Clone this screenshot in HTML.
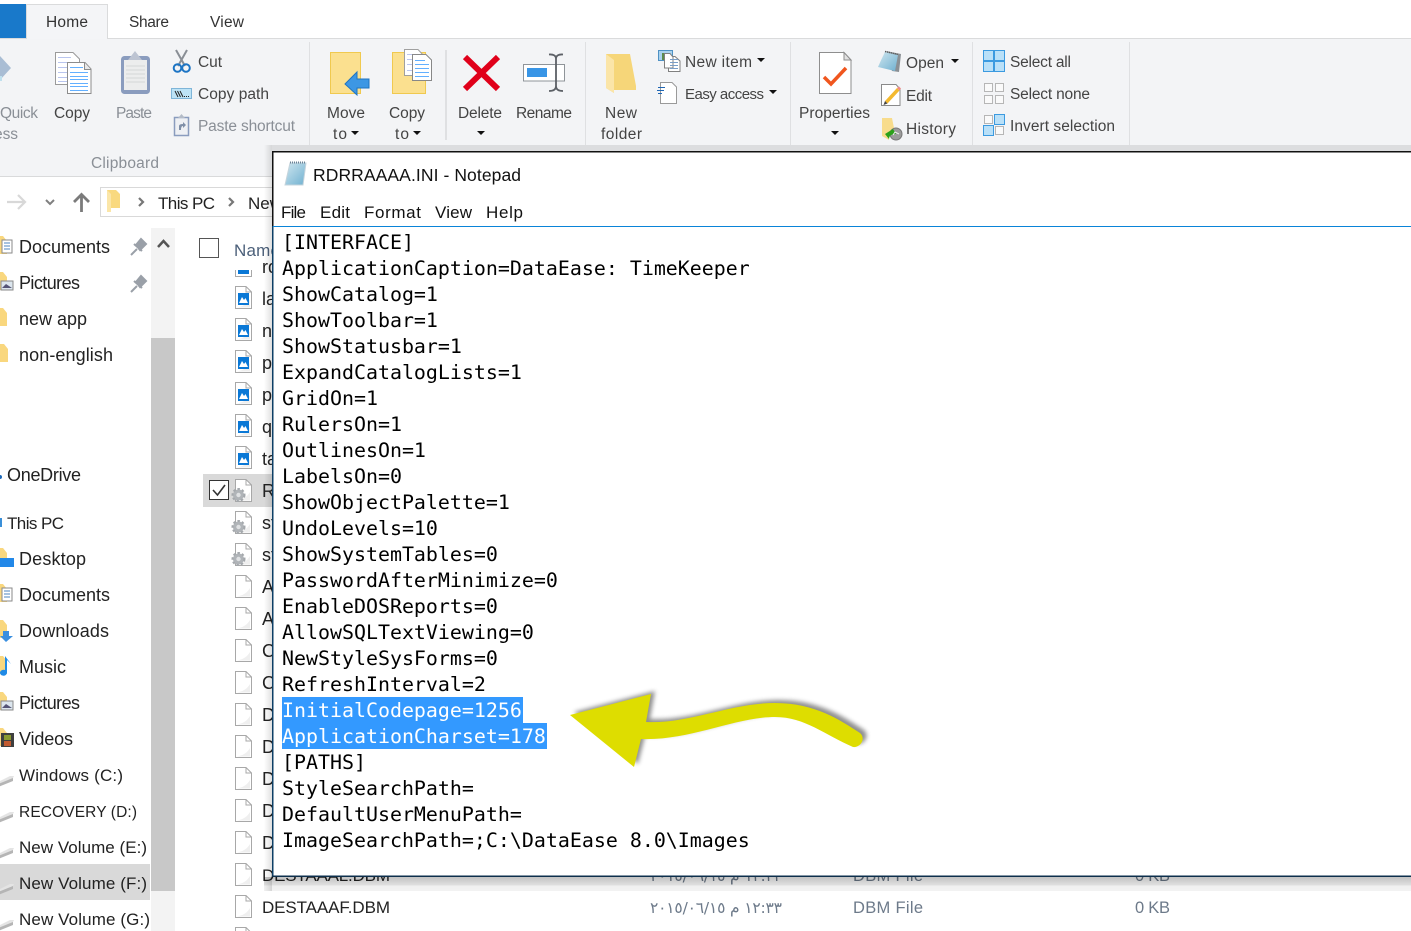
<!DOCTYPE html>
<html><head><meta charset="utf-8"><title>RDRRAAAA.INI - Notepad</title>
<style>
html,body{margin:0;padding:0;background:#fff;width:1411px;height:931px;overflow:hidden}
svg{display:block;position:absolute;left:0;top:0}
text{font-family:"Liberation Sans","DejaVu Sans",sans-serif;font-size:16px;fill:#1a1a1a;white-space:pre}
.r{font-size:15.5px;fill:#444}
.g{font-size:15.5px;fill:#8a8f96}
.s{font-size:17px;fill:#111}
.f{font-size:17px;fill:#222}
.b{font-size:18px;fill:#222}
.d{font-size:16.5px;fill:#6d7a8a}
.a{font-family:"DejaVu Sans",sans-serif;font-size:15.5px;fill:#6d7a8a}
.m{font-family:"DejaVu Sans Mono","Liberation Mono",monospace;font-size:19.93px;fill:#000}
.w{fill:#fff}
</style></head><body>
<svg width="1411" height="931" viewBox="0 0 1411 931" xmlns="http://www.w3.org/2000/svg">
<defs>
<linearGradient id="sb" x1="0" y1="0" x2="0" y2="1"><stop offset="0" stop-color="#000" stop-opacity=".24"/><stop offset="0.6" stop-color="#000" stop-opacity=".12"/><stop offset="0.62" stop-color="#000" stop-opacity=".06"/><stop offset="1" stop-color="#000" stop-opacity=".05"/></linearGradient>
<linearGradient id="sl" x1="0" y1="0" x2="1" y2="0"><stop offset="0" stop-color="#000" stop-opacity="0"/><stop offset="1" stop-color="#000" stop-opacity=".12"/></linearGradient>
<linearGradient id="np" x1="0" y1="0" x2="1" y2="1"><stop offset="0" stop-color="#cfe6ef"/><stop offset="1" stop-color="#6fb0d0"/></linearGradient>
<filter id="blur" x="-20%" y="-20%" width="140%" height="140%"><feGaussianBlur stdDeviation="2"/></filter>
<g id="blank"><path d="M.5.5H11L16.5 6V22.5H.5Z" fill="#fff" stroke="#a8a8a8"/><path d="M11 .5V6H16.5" fill="none" stroke="#a8a8a8"/><path d="M2 21.500H15V13Q11 20 2 21.500Z" fill="#efefef"/></g>
<g id="img"><use href="#blank"/><rect x="3" y="7" width="11" height="12" fill="#0a78d6"/><path d="M4 17L7 11 9 14 10.500 12 13 17Z" fill="#fff"/></g>
<g id="gear"><use href="#blank"/><circle cx="3.500" cy="16" r="5.500" fill="#b0b4b8"/><circle cx="3.500" cy="16" r="6" fill="none" stroke="#a4a8ac" stroke-width="2" stroke-dasharray="2.500 2"/><circle cx="3.500" cy="16" r="2.200" fill="#dfe1e3"/></g>
<g id="drive"><path d="M-2 9L10 3H14L12 7 -2 13Z" fill="#e4e4e4"/><path d="M-2 11L13 5V8L-2 14Z" fill="#b5b5b5"/></g>
<g id="fold"><path d="M0 0H5L9 5V18H0Z" fill="#f9d77e"/></g>
<g id="pin"><path d="M7 13L1 19M4 8L12 15M6 9L11 3 16 8 10 14Z" fill="#9aa0a8" stroke="#9aa0a8" stroke-width="2"/></g>
<g id="caret"><path d="M0 0H8L4 4Z" fill="#111"/></g>
<g id="chev"><path d="M0 0L4 4 0 8" fill="none" stroke="#777" stroke-width="2.200"/></g>
</defs>

<!-- title tabs -->
<rect width="1411" height="39" fill="#fff"/>
<rect x="0" y="4" width="26" height="35" fill="#1979ca"/>
<rect y="38" width="1411" height="1" fill="#dadbdc"/>
<path d="M26.500 39V4.500H107.500V39" fill="#f4f5f7" stroke="#dadbdc"/>
<text x="46" y="27" class="f" textLength="42" style="font-size:15.500px;fill:#333">Home</text>
<text x="129" y="27" class="f" textLength="40" style="font-size:15.500px;fill:#333">Share</text>
<text x="210" y="27" class="f" textLength="34" style="font-size:15.500px;fill:#333">View</text>

<!-- ribbon -->
<rect y="39" width="1411" height="137" fill="#f3f4f6"/>
<rect x="0" y="176" width="1411" height="1" fill="#d9dadb"/>
<g fill="#dfe0e2"><rect x="309" y="42" width="1" height="108"/><rect x="445" y="50" width="2" height="90"/><rect x="585" y="42" width="1" height="108"/><rect x="790" y="42" width="1" height="108"/><rect x="972" y="42" width="1" height="108"/><rect x="1129" y="42" width="1" height="108"/></g>

<!-- quick pin -->
<path d="M0 56L11 68 0 80Z" fill="#a9bdd4"/><rect y="76" width="2" height="5" fill="#bfe0ee"/>
<text x="0" y="118" class="g" textLength="38">Quick</text>
<text x="-6" y="139" class="g" textLength="24">ess</text>

<!-- copy -->
<path d="M55.500 52.500H73L79.500 59V84.500H55.500Z" fill="#fff" stroke="#9a9a9a"/>
<g stroke="#b9c5ee"><path d="M58 57.500H71M58 62.500H75M58 67.500H67M58 72.500H67M58 77.500H67M58 81.500H67"/></g>
<path d="M67.500 62.500H85L91 69V93.500H67.500Z" fill="#fff" stroke="#8c8c8c"/><path d="M84.500 62.500V69.500H91" fill="#e8e8e8" stroke="#8c8c8c"/>
<g stroke="#63b0ff"><path d="M70 67.500H83M70 72.500H88M70 76.500H88M70 79.500H88M70 83.500H88M70 86.500H88M70 90.500H88"/></g>
<text x="54" y="118" class="s" style="font-size:15.500px;fill:#444" textLength="36">Copy</text>

<!-- paste -->
<rect x="121.500" y="56.500" width="28" height="37" rx="3" fill="#8a9cbe" stroke="#8a9cbe"/>
<rect x="124" y="60" width="23" height="30" fill="#eceded"/>
<path d="M126 66H145M126 70H145M126 74H145M126 78H145M126 82H145" stroke="#d4d6d8"/>
<path d="M128 60L135 51 142 60Z" fill="#bdc4d2"/>
<text x="116" y="118" class="g" textLength="36">Paste</text>

<!-- cut -->
<path d="M176 50L185 66M187 50L178 66" stroke="#8a8f96" stroke-width="2" fill="none"/>
<circle cx="177.500" cy="68" r="3.800" fill="none" stroke="#1c74c4" stroke-width="2"/><circle cx="186" cy="68" r="3.800" fill="none" stroke="#1c74c4" stroke-width="2"/>
<text x="198" y="67" class="r" textLength="24">Cut</text>
<!-- copy path -->
<rect x="171.500" y="88.500" width="20" height="10" fill="#bde3f6" stroke="#7fb5d8"/>
<path d="M175 91L178 97M177.500 91L180.500 97M180 91L183 97" stroke="#222" fill="none"/><path d="M184 96.500H190" stroke="#222" stroke-dasharray="1 1"/>
<text x="198" y="99" class="r" textLength="71">Copy path</text>
<!-- paste shortcut -->
<rect x="174.500" y="117.500" width="14" height="18" fill="#eef0f4" stroke="#8a9cbe" stroke-width="1.500"/><path d="M178 118L181.500 114 185 118Z" fill="#b4bcc8"/><path d="M179 130V126Q179 124 183 124V122L186 125 183 128V126Q181 126 181 130Z" fill="#7f8fa8"/>
<text x="198" y="131" class="g" textLength="97">Paste shortcut</text>
<text x="91" y="168" class="g" textLength="68">Clipboard</text>

<!-- move to -->
<rect x="330.500" y="52.500" width="30" height="41" fill="#fbe08f" stroke="#f0c94f"/>
<path d="M345 84L357 72V79H369V88H357V95Z" fill="#3d97e4" stroke="#1f74c0"/>
<text x="327" y="118" class="r" textLength="38">Move</text><text x="333" y="139" class="r" textLength="14">to</text><use href="#caret" x="351" y="131"/>
<!-- copy to -->
<rect x="392.500" y="52.500" width="33" height="41" fill="#fbe08f" stroke="#f0c94f"/>
<path d="M404.500 49.500H418L424 56V75.500H404.500Z" fill="#fff" stroke="#a0a0a0"/><g stroke="#bbc6ee"><path d="M407 54.500H416M407 59.500H418M407 64.500H412M407 70.500H412"/></g>
<path d="M412.500 54.500H426L431.500 60V80.500H412.500Z" fill="#fff" stroke="#888"/><g stroke="#63b0ff"><path d="M415 60.500H425M415 64.500H429M415 68.500H429M415 72.500H429M415 76.500H429"/></g>
<text x="389" y="118" class="r" textLength="36">Copy</text><text x="395" y="139" class="r" textLength="14">to</text><use href="#caret" x="413" y="131"/>
<!-- delete -->
<path d="M465 57L498 89M498 57L465 89" stroke="#e0001a" stroke-width="6" fill="none"/>
<text x="458" y="118" class="r" textLength="44">Delete</text><use href="#caret" x="477" y="131"/>
<!-- rename -->
<rect x="523.500" y="64.500" width="41" height="16.500" fill="#fff" stroke="#8f9499"/><rect x="527" y="68" width="20" height="9" fill="#3895e6"/>
<path d="M549 54.500Q556 54 556 59V86Q556 91 549 91M563 54.500Q556 54 556 59M563 91Q556 91 556 86" fill="none" stroke="#5c6066" stroke-width="1.800"/>
<text x="516" y="118" class="r" textLength="56">Rename</text>
<!-- new folder -->
<path d="M606 54H630L636 86V90H614V93L606 88Z" fill="#f6d679"/><path d="M606 54L614 60V93L606 88Z" fill="#fbe5a8"/>
<text x="605" y="118" class="r" textLength="32">New</text><text x="601" y="139" class="r" textLength="41">folder</text>
<!-- new item -->
<rect x="658.500" y="50.500" width="14" height="10" fill="#a9d2ee" stroke="#4e91c4"/><rect x="662" y="53" width="3" height="7" fill="#5c8b4c"/>
<path d="M668.500 56.500H675L680 61V71.500H668.500Z" fill="#fff" stroke="#808080"/><path d="M664.500 53.500H670L673 57V68H664.500Z" fill="#fff" stroke="#808080"/><path d="M670 59.500H678M670 62.500H678M670 65.500H678M670 68.500H678" stroke="#7a9ec7"/>
<text x="685" y="67" class="r" textLength="67">New item</text><use href="#caret" x="757" y="58"/>
<!-- easy access -->
<path d="M660.500 82.500H672L676.500 87V103.500H660.500Z" fill="#fff" stroke="#9a9a9a"/><path d="M658 87.500H665M657 90.500H664M658 93.500H662" stroke="#1f66b4"/>
<text x="685" y="99" class="r" style="font-size:15px" textLength="79">Easy access</text><use href="#caret" x="769" y="90"/>
<!-- properties -->
<path d="M819.500 52.500H844L851 60V93.500H819.500Z" fill="#fff" stroke="#8e8e8e"/><path d="M844 52.500V60H851Z" fill="#e2e2e2" stroke="#8e8e8e"/>
<path d="M824 77L831 84 846 68" stroke="#f0561e" stroke-width="3.500" fill="none"/>
<text x="799" y="118" class="r" textLength="71">Properties</text><use href="#caret" x="831" y="131"/>
<!-- open -->
<path d="M886 51L901 54 899 72 892 71Z" fill="#8a8f94"/><path d="M885 52L898 55 895 71 878 67Q881 60 885 52Z" fill="url(#np)"/><path d="M885 51.500L898 54.500" stroke="#555" stroke-width="1.500" stroke-dasharray="1 1"/>
<text x="906" y="68" class="r" textLength="38">Open</text><use href="#caret" x="951" y="59"/>
<!-- edit -->
<path d="M881.500 84.500H896L900 89V105.500H881.500Z" fill="#fff" stroke="#8a8a8a"/><path d="M885 101L897 88 899.500 90.500 887.500 103.500Z" fill="#f3b92f"/><path d="M897 88L899.500 90.500 901 88.500 899 86.500Z" fill="#e88"/><path d="M883.500 105L885 101 887.500 103.500Z" fill="#444"/>
<text x="906" y="101" class="r" textLength="26">Edit</text>
<!-- history -->
<path d="M882 118H892L894 128 889 133V140L882 136Z" fill="#f8dc8c"/><circle cx="896" cy="134" r="6" fill="#9b9b9b" stroke="#777"/><path d="M893 129L885 134 889 139Q889 134 896 134Z" fill="#2ba01a"/><path d="M893 135L895 132 899 134" stroke="#eee" fill="none"/>
<text x="906" y="134" class="r" textLength="50">History</text>
<!-- select -->
<g stroke="#3b9ae0" fill="#b9e0f8"><rect x="983.500" y="50.500" width="10" height="10"/><rect x="994.500" y="50.500" width="10" height="10"/><rect x="983.500" y="61.500" width="10" height="10"/><rect x="994.500" y="61.500" width="10" height="10"/></g>
<text x="1010" y="67" class="r" textLength="61">Select all</text>
<g stroke="#b6b6b6" fill="#fafafa"><rect x="984.500" y="83.500" width="8" height="8"/><rect x="995.500" y="83.500" width="8" height="8"/><rect x="984.500" y="95.500" width="8" height="8"/><rect x="995.500" y="95.500" width="8" height="8"/></g>
<text x="1010" y="99" class="r" textLength="80">Select none</text>
<g stroke="#b6b6b6" fill="#fafafa"><rect x="984.500" y="115.500" width="8" height="8"/><rect x="995.500" y="126.500" width="8" height="8"/></g>
<g stroke="#3b9ae0" fill="#b9e0f8"><rect x="994.500" y="114.500" width="10" height="10"/><rect x="983.500" y="125.500" width="10" height="10"/></g>
<text x="1010" y="131" class="r" textLength="105">Invert selection</text>

<!-- nav bar -->
<path d="M7 202H25M18 195L25 202 18 209" stroke="#d8d8d8" stroke-width="2.200" fill="none"/>
<path d="M46 200L50 204 54 200" stroke="#808080" stroke-width="2" fill="none"/>
<path d="M81.500 212V195M74 202L81.500 194.500 89 202" stroke="#7b7b7b" stroke-width="2.800" fill="none"/>
<rect x="100.500" y="187.500" width="180" height="29" fill="#fff" stroke="#d9d9d9"/>
<path d="M107 190H116L120 194V208H110L107 212Z" fill="#f9d97f"/><path d="M107 190L111 194V212H107Z" fill="#fbe6a8"/>
<use href="#chev" x="139" y="198"/>
<text x="158" y="209" class="f" textLength="57">This PC</text>
<use href="#chev" x="229" y="198"/>
<text x="248" y="209" class="f" textLength="34">New</text>

<!-- sidebar -->
<rect x="151" y="228" width="24" height="110" fill="#f3f3f3"/>
<rect x="151" y="338" width="24" height="553" fill="#c8c8c8"/>
<rect x="151" y="891" width="24" height="40" fill="#f3f3f3"/>
<path d="M158 247L163.500 241 169 247" stroke="#555" stroke-width="2.500" fill="none"/>
<rect x="0" y="864" width="150" height="36" fill="#d9d9d9"/>
<use href="#fold" x="-2" y="236"/><use href="#fold" x="-2" y="272"/><use href="#fold" x="-2" y="308"/><use href="#fold" x="-1" y="344"/>
<rect x="2" y="240" width="10" height="13" fill="#fff" stroke="#8a8a8a"/><path d="M4 243H10M4 246H10M4 249H10" stroke="#4c85c0"/>
<rect x="1" y="281" width="12" height="9" fill="#dce6ee" stroke="#888"/><path d="M2 288L6 284 12 288Z" fill="#557"/>
<use href="#pin" x="130" y="236"/><use href="#pin" x="130" y="273"/>
<text x="19" y="253" class="b" textLength="91">Documents</text>
<text x="19" y="289" class="b" textLength="61">Pictures</text>
<text x="19" y="325" class="b" textLength="68">new app</text>
<text x="19" y="361" class="b" textLength="94">non-english</text>
<circle cx="0" cy="477" r="2" fill="#1c68b8"/>
<text x="7" y="481" class="b" textLength="74">OneDrive</text>
<rect x="-2" y="518" width="4" height="9" fill="#3a8fd8"/>
<text x="7" y="529" class="f" textLength="57">This PC</text>
<use href="#fold" x="-2" y="548"/><rect x="0" y="558" width="14" height="9" fill="#2288e8"/>
<text x="19" y="565" class="b" textLength="67">Desktop</text>
<use href="#fold" x="-2" y="584"/><rect x="2" y="588" width="10" height="13" fill="#fff" stroke="#8a8a8a"/><path d="M4 591H10M4 594H10M4 597H10" stroke="#4c85c0"/>
<text x="19" y="601" class="b" textLength="91">Documents</text>
<use href="#fold" x="-2" y="620"/><path d="M3 631H9V636H13L6 642 0 636H3Z" fill="#3a8fe0"/>
<text x="19" y="637" class="b" textLength="90">Downloads</text>
<use href="#fold" x="-2" y="656"/><path d="M7 660V673A3.500 3 0 1 1 5 670V656L11 664Z" fill="#1f8ae6"/>
<text x="19" y="673" class="b" textLength="47">Music</text>
<use href="#fold" x="-2" y="692"/><rect x="1" y="701" width="12" height="9" fill="#dce6ee" stroke="#888"/><path d="M2 708L6 704 12 708Z" fill="#557"/>
<text x="19" y="709" class="b" textLength="61">Pictures</text>
<use href="#fold" x="-2" y="728"/><rect x="1" y="733" width="13" height="14" fill="#3f3f3f"/><rect x="4" y="735" width="7" height="5" fill="#8a9a30"/><rect x="4" y="741" width="7" height="5" fill="#c25a30"/>
<text x="19" y="745" class="b" textLength="54">Videos</text>
<use href="#drive" y="773"/><text x="19" y="781" class="f" textLength="104">Windows (C:)</text>
<use href="#drive" y="809"/><text x="19" y="817" class="f" style="font-size:15.500px" textLength="118">RECOVERY (D:)</text>
<use href="#drive" y="845"/><text x="19" y="853" class="f" textLength="128">New Volume (E:)</text>
<use href="#drive" y="881"/><text x="19" y="889" class="f" textLength="128">New Volume (F:)</text>
<use href="#drive" y="917"/><text x="19" y="925" class="f" textLength="131">New Volume (G:)</text>

<!-- files -->
<rect x="199.500" y="238.500" width="19" height="19" fill="#fff" stroke="#555"/>
<text x="234" y="256" class="d" style="font-size:17px;fill:#4c607a" textLength="46">Name</text>
<rect x="203" y="474" width="80" height="33" fill="#d9d9d9"/>
<rect x="209.500" y="480.500" width="19" height="19" fill="#fff" stroke="#333"/><path d="M213 490L217.500 495 225 485" stroke="#333" stroke-width="1.600" fill="none"/>
<rect x="235" y="270" width="17" height="7" fill="#fff"/><rect x="238" y="270" width="11" height="4" fill="#0a78d6"/><path d="M235.500 270V276.500H251.500V270" fill="none" stroke="#a8a8a8"/>
<use href="#img" x="235" y="286"/><use href="#img" x="235" y="318"/><use href="#img" x="235" y="350"/><use href="#img" x="235" y="382"/><use href="#img" x="235" y="414"/><use href="#img" x="235" y="446"/>
<use href="#gear" x="235" y="479"/><use href="#gear" x="235" y="511"/><use href="#gear" x="235" y="543"/>
<use href="#blank" x="235" y="575"/><use href="#blank" x="235" y="607"/><use href="#blank" x="235" y="639"/><use href="#blank" x="235" y="671"/><use href="#blank" x="235" y="703"/><use href="#blank" x="235" y="735"/><use href="#blank" x="235" y="767"/><use href="#blank" x="235" y="799"/><use href="#blank" x="235" y="831"/><use href="#blank" x="235" y="863"/><use href="#blank" x="235" y="895"/><use href="#blank" x="235" y="927"/>
<g>
<text x="262" y="273" class="b">rd</text><text x="262" y="305" class="b">la</text><text x="262" y="337" class="b">n</text><text x="262" y="369" class="b">p</text><text x="262" y="401" class="b">p</text><text x="262" y="433" class="b">q</text><text x="262" y="465" class="b">ta</text><text x="262" y="497" class="b">R</text><text x="262" y="529" class="b">st</text><text x="262" y="561" class="b">st</text><text x="262" y="593" class="b">A</text><text x="262" y="625" class="b">A</text><text x="262" y="657" class="b">C</text><text x="262" y="689" class="b">C</text><text x="262" y="721" class="b">D</text><text x="262" y="753" class="b">D</text><text x="262" y="785" class="b">D</text><text x="262" y="817" class="b">D</text><text x="262" y="849" class="b">D</text>
</g>
<text x="262" y="881" class="f" textLength="128">DESTAAAL.DBM</text>
<text x="262" y="913" class="f" textLength="128">DESTAAAF.DBM</text>
<text x="650" y="881" class="a" textLength="132">١٢:٣٣ م ٢٠١٥/٠٦/١٥</text>
<text x="650" y="913" class="a" textLength="132">١٢:٣٣ م ٢٠١٥/٠٦/١٥</text>
<text x="853" y="881" class="d" textLength="70">DBM File</text><text x="853" y="913" class="d" textLength="70">DBM File</text>
<text x="1135" y="881" class="d" textLength="35">0 KB</text><text x="1135" y="913" class="d" textLength="35">0 KB</text>

<!-- notepad shadow -->
<rect x="264" y="145" width="8" height="746" fill="url(#sl)"/>
<rect x="272" y="145" width="1139" height="6" fill="#dcdddf"/>
<rect x="264" y="877" width="1147" height="14" fill="url(#sb)"/>

<!-- notepad -->
<rect x="272" y="151" width="1139" height="726" fill="#fff"/>
<rect x="272" y="151" width="1139" height="1.500" fill="#111"/>
<rect x="272" y="151" width="1.500" height="75" fill="#111"/>
<rect x="272" y="226" width="1.500" height="651" fill="#0d3f66"/>
<rect x="272" y="875.500" width="1139" height="1.500" fill="#0d2f4c"/>
<rect x="273" y="226" width="1138" height="1" fill="#0a84d8"/>
<path d="M290 163H306L303 185H285Z" fill="url(#np)" stroke="#c5d4dc"/><path d="M290 162.500H306" stroke="#6a8296" stroke-width="2" stroke-dasharray="1 1"/>
<text x="313" y="181" class="s" style="font-size:17.500px" textLength="208">RDRRAAAA.INI - Notepad</text>
<text x="281" y="218" class="s" textLength="25">File</text><text x="320" y="218" class="s" textLength="30">Edit</text><text x="364" y="218" class="s" textLength="57">Format</text><text x="435" y="218" class="s" textLength="37">View</text><text x="486" y="218" class="s" textLength="37">Help</text>

<rect x="282" y="697" width="241" height="26" fill="#3399ff"/>
<rect x="282" y="723" width="265" height="26" fill="#3399ff"/>
<text x="282" y="249" class="m">[INTERFACE]</text>
<text x="282" y="275" class="m">ApplicationCaption=DataEase: TimeKeeper</text>
<text x="282" y="301" class="m">ShowCatalog=1</text>
<text x="282" y="327" class="m">ShowToolbar=1</text>
<text x="282" y="353" class="m">ShowStatusbar=1</text>
<text x="282" y="379" class="m">ExpandCatalogLists=1</text>
<text x="282" y="405" class="m">GridOn=1</text>
<text x="282" y="431" class="m">RulersOn=1</text>
<text x="282" y="457" class="m">OutlinesOn=1</text>
<text x="282" y="483" class="m">LabelsOn=0</text>
<text x="282" y="509" class="m">ShowObjectPalette=1</text>
<text x="282" y="535" class="m">UndoLevels=10</text>
<text x="282" y="561" class="m">ShowSystemTables=0</text>
<text x="282" y="587" class="m">PasswordAfterMinimize=0</text>
<text x="282" y="613" class="m">EnableDOSReports=0</text>
<text x="282" y="639" class="m">AllowSQLTextViewing=0</text>
<text x="282" y="665" class="m">NewStyleSysForms=0</text>
<text x="282" y="691" class="m">RefreshInterval=2</text>
<text x="282" y="717" class="m w">InitialCodepage=1256</text>
<text x="282" y="743" class="m w">ApplicationCharset=178</text>
<text x="282" y="769" class="m">[PATHS]</text>
<text x="282" y="795" class="m">StyleSearchPath=</text>
<text x="282" y="821" class="m">DefaultUserMenuPath=</text>
<text x="282" y="847" class="m">ImageSearchPath=;C:\DataEase 8.0\Images</text>

<!-- arrow -->
<path d="M570 715L651 694 646 722C690 724 730 703 775 703 815 703 840 720 860 733 866 738 861 748 853 747 825 735 805 717 775 717 735 717 690 741 641 739L634 767Z" fill="#555" opacity=".65" filter="url(#blur)" transform="translate(4 -3)"/>
<path d="M570 715L651 694 646 722C690 724 730 703 775 703 815 703 840 720 860 733 866 738 861 748 853 747 825 735 805 717 775 717 735 717 690 741 641 739L634 767Z" fill="#dedd00"/>
</svg>
</body></html>
